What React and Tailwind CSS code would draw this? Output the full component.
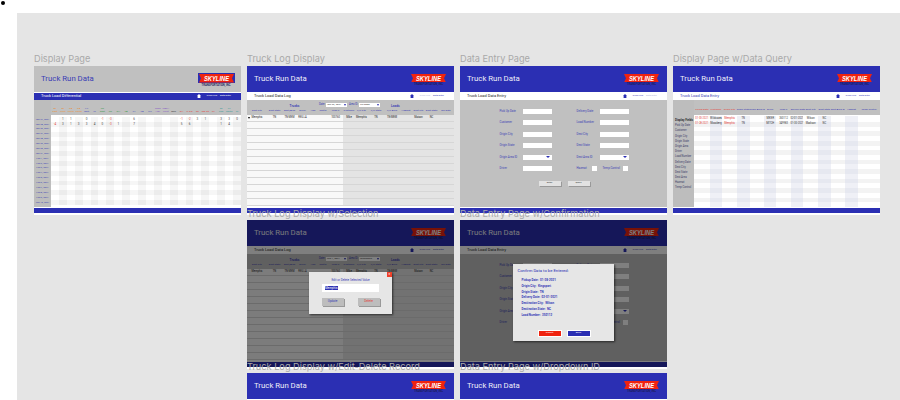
import React from 'react';

const BLUE = 'bg-[#2b2fb3]';

const Logo = ({ boxed }) => (
    <div className={`flex flex-col items-center mt-[2px] ${boxed ? 'mr-[-1.5px]' : ''}`}>
        <svg width={boxed ? 37 : 35} height={boxed ? 10.5 : 8.5} viewBox={boxed ? '-1 -1 37 10.5' : '0 0 35 8.5'} className="block">
            {boxed && <rect x="-1" y="-1" width="37" height="10.5" fill="#2b2fb3" />}
            <polygon points="0,0 35,0 33,4.25 35,8.5 0,8.5 2,4.25" fill="#f0230f" />
            <text x="17.5" y="6.6" textAnchor="middle" textLength="25" lengthAdjust="spacingAndGlyphs" fontFamily="Liberation Sans, sans-serif" fontSize="6.4" fontWeight="700" fontStyle="italic" fill="#fff">SKYLINE</text>
        </svg>
        <span className="text-[2.7px] leading-[3px] mt-[1px] text-[#1c1c5a] font-semibold whitespace-nowrap">TRANSPORTATION, INC</span>
    </div>
);

const HomeIcon = ({ color = '#2b2fb3' }) => (
    <svg width="4" height="4" viewBox="0 0 10 10" className="block">
        <polygon points="5,0 10,5 8.5,5 8.5,10 1.5,10 1.5,5 0,5" fill={color} />
    </svg>
);

const Header = ({ gray }) => (
    <div className={`h-[26px] flex items-center justify-between pl-[7px] pr-[8px] ${gray ? 'bg-[#c0c0c0]' : BLUE}`}>
        <span className={`text-[7.8px] leading-none ${gray ? 'text-[#3a3db5]' : 'text-[#eeeef8]'}`}>Truck Run Data</span>
        <Logo boxed={gray} />
    </div>
);

const Nav = ({ title, blue, titleClass = 'text-[#222]', dimEntry, dimLog }) => (
    <div className={`h-[7.5px] mt-[0.5px] flex items-center justify-between pl-[7px] pr-[10px] ${blue ? BLUE : 'bg-white'}`}>
        <span className={`text-[4px] leading-none ${blue ? 'text-white' : titleClass}`}>{title}</span>
        <div className="flex items-center gap-[3px]">
            <HomeIcon color={blue ? '#fff' : '#2b2fb3'} />
            <span className={`text-[2.4px] ml-[3px] ${blue ? 'text-white' : dimLog ? 'text-[#b4b4d8]' : 'text-[#3a3db5]'}`}>Truck Log</span>
            <span className={`text-[2.4px] ${blue ? 'text-white' : dimEntry ? 'text-[#b4b4d8]' : 'text-[#3a3db5]'}`}>Data Entry</span>
        </div>
    </div>
);

const Footer = () => <div className={`h-[5.5px] mt-[0.5px] ${BLUE}`} />;

// top row group colours of the differential table
const stateCols = [
    ['AL East', 'text-[#e8913a]'], ['AL West', 'text-[#e8913a]'], ['GA North', 'text-[#e8913a]'], ['GA South', 'text-[#e8913a]'],
    ['KY East', 'text-[#4a4fc0]'], ['IN', 'text-[#4a4fc0]'], ['NC East', 'text-[#3c9a4a]'], ['NC', 'text-[#3c9a4a]'],
    ['OH', 'text-[#3c9a4a]'], ['PA', 'text-[#3c9a4a]'], ['TX', 'text-[#4a4fc0]'], ['VA', 'text-[#4a4fc0]'],
    ['WV', 'text-[#4a4fc0]'], ['MEM HZL', 'text-[#8a5cc4]'], ['NASH Front', 'text-[#8a5cc4]'], ['NUL', 'text-[#222]'],
    ['OH', 'text-[#e2413a]'], ['IL Chi', 'text-[#e2413a]'], ['MI', 'text-[#e2413a]'], ['MO Stl', 'text-[#e2413a]'],
    ['WI', 'text-[#e2413a]'], ['SC Chs', 'text-[#2f9a94]'], ['FL North', 'text-[#2f9a94]'], ['FL', 'text-[#2f9a94]'],
];

const dates = [
    'Jan 24, 2021', 'Jan 25, 2021', 'Jan 26, 2021', 'Jan 27, 2021', 'Jan 28, 2021', 'Jan 29, 2021', 'Jan 30, 2021', 'Jan 31, 2021',
    'Feb 1, 2021', 'Feb 2, 2021', 'Feb 3, 2021', 'Feb 4, 2021', 'Feb 5, 2021', 'Feb 6, 2021', 'Feb 7, 2021', 'Feb 8, 2021', 'Feb 9, 2021', 'Feb 10, 2021',
];

const diffValues = {
    0: { 1: '1', 2: '1', 4: '0', 6: '-1', 7: '-3', 10: '6', 16: '-1', 17: '-2', 18: '3', 19: '1', 21: '3', 22: '3', 23: '0' },
    1: { 0: '-4', 1: '3', 2: '1', 3: '3', 4: '3', 5: '4', 6: '0', 7: '-3', 8: '1', 10: '7', 16: '5', 17: '6', 21: '1', 22: '4' },
};

const DisplayPage = () => (
    <>
        <Header gray />
        <Nav title="Truck Load Differential" blue />
        <div className="flex h-[107px]">
            <div className="w-[17px] bg-[#bdbdbd] pt-[17px]">
                {dates.map(d => (
                    <div key={d} className="h-[4.88px] flex items-center justify-center text-[2.4px] text-[#3a3db5] whitespace-nowrap">{d}</div>
                ))}
            </div>
            <div className="flex-1 flex flex-col">
                <div className="h-[15px] shrink-0 bg-[#c0c0c0] grid grid-cols-[repeat(24,1fr)] items-end pb-[2px]">
                    {stateCols.map(([name, color], i) => (
                        <span key={i} className={`text-[2.5px] leading-[3px] text-center ${color}`}>{name}</span>
                    ))}
                </div>
                <div className="flex-1 flex flex-col py-[2px] bg-white">
                    {dates.map((d, r) => (
                        <div key={d} className="flex-1 min-h-0 grid grid-cols-[repeat(24,1fr)]">
                            {stateCols.map((_, c) => {
                                const val = diffValues[r] && diffValues[r][c];
                                let bg = 'bg-white';
                                if (r % 2 === 1 && c % 2 === 1) bg = 'bg-[#ececec]';
                                else if (r % 2 === 1 || c % 2 === 1) bg = 'bg-[#f6f6f6]';
                                return (
                                    <div key={c} className={`${bg} flex items-center justify-center text-[3px] leading-none ${val && val[0] === '-' ? 'text-[#e2413a]' : 'text-[#444]'}`}>{val}</div>
                                );
                            })}
                        </div>
                    ))}
                </div>
            </div>
        </div>
        <Footer />
    </>
);

const logCols = ['Dest City', 'Dest State', 'Dest/Area', 'Driver', 'Haz', 'Reefer', 'Load #', 'Customer', 'P/U City', 'P/U State', 'P/U Area', 'Hazmat', 'Dest City', 'Dest State', 'Del Date'];
const logRow = ['Memphis', 'TN', 'TN-MEM', 'REILLA', '', '', '100760', 'Mike', 'Memphis', 'TN', 'TN-MEM', '', 'Maison', 'NC', ''];
const logGrid = 'grid grid-cols-[20px_15px_15px_11px_10px_10px_15px_12px_13px_16px_16px_12px_13px_13px_16px]';

const MiniSelect = ({ value, width }) => (
    <div className={`${width} h-[4px] bg-white flex items-center justify-between pl-[1px] pr-[1px]`}>
        <span className="text-[2.5px] leading-none text-[#333] whitespace-nowrap">{value}</span>
        <span className="w-0 h-0 border-l-[1.5px] border-r-[1.5px] border-t-[2px] border-l-transparent border-r-transparent border-t-[#2b2fb3]" />
    </div>
);

const LogDisplay = ({ date, area, dim }) => (
    <>
        <Header />
        <Nav title="Truck Load Data Log" dimLog={!dim} />
        <div className="h-[15px] bg-[#c0c0c0] flex flex-col">
            <div className="flex items-center h-[8px] pt-[2px]">
                <span className="w-[63px] pt-[2px] text-center pl-[32px] text-[3.2px] font-semibold text-[#3a3db5]">Trucks</span>
                <span className="ml-[9px] text-[2.6px] text-[#3a3db5] mr-[1px]">Date:</span>
                <MiniSelect value={date} width="w-[21px]" />
                <span className="ml-[2px] mr-[1px] text-[2.6px] text-[#3a3db5] whitespace-nowrap">Area ID:</span>
                <MiniSelect value={area} width="w-[21px]" />
                <span className="ml-[11px] pt-[2px] text-[3.2px] font-semibold text-[#3a3db5]">Loads</span>
            </div>
            <div className={`${logGrid} flex-1 items-center`}>
                {logCols.map((c, i) => (
                    <span key={i} className="text-[2.5px] leading-none text-center text-[#3a3db5] whitespace-nowrap">{c}</span>
                ))}
            </div>
        </div>
        <div className="h-[92px] flex flex-col">
            {Array.from({ length: 13 }).map((_, r) => (
                <div key={r} className={`${logGrid} h-[7px] border-b border-[#d6d6d6]`}>
                    {logRow.map((v, i) => (
                        <div key={i} className={`relative flex items-center justify-center text-[2.6px] leading-none text-[#222] whitespace-nowrap ${i < 7 ? 'bg-[#f8f8f8]' : 'bg-[#e4e4e4]'}`}>
                            {r === 0 && v}
                            {r === 0 && i === 0 && !dim && (
                                <span className="absolute left-[1px] top-[2px] w-0 h-0 border-l-[1.5px] border-r-[1.5px] border-t-[2px] border-l-transparent border-r-transparent border-t-black" />
                            )}
                        </div>
                    ))}
                </div>
            ))}
        </div>
        <Footer />
    </>
);

const Field = ({ label, select }) => (
    <div className="flex items-center h-[5px]">
        <span className="w-[23px] text-[2.9px] leading-none text-[#3a3db5] whitespace-nowrap">{label}</span>
        <div className="w-[29px] h-[5px] bg-white flex items-center justify-end pr-[1.5px]">
            {select && <span className="w-0 h-0 border-l-[2px] border-r-[2px] border-t-[2.5px] border-l-transparent border-r-transparent border-t-[#2b2fb3]" />}
        </div>
    </div>
);

const Check = ({ label, width }) => (
    <div className="flex items-center h-[5px]">
        <span className={`${width} text-[2.9px] leading-none text-[#3a3db5] whitespace-nowrap`}>{label}</span>
        <div className="w-[5px] h-[5px] bg-white" />
    </div>
);

const DataEntry = ({ dimLog }) => (
    <>
        <Header />
        <Nav title="Truck Load Data Entry" dimEntry={!dimLog} />
        <div className="h-[107px] bg-[#c0c0c0] flex flex-col pt-[8.5px] items-center">
            <div className="grid grid-cols-[52px_52px] gap-x-[25px] gap-y-[6.5px] ml-[1px]">
                <Field label="Pick Up Date" />
                <Field label="Delivery Date" />
                <Field label="Customer" />
                <Field label="Load Number" />
                <Field label="Origin City" />
                <Field label="Dest City" />
                <Field label="Origin State" />
                <Field label="Dest State" />
                <Field label="Origin Area ID" select />
                <Field label="Dest Area ID" select />
                <Field label="Driver" />
                <div className="flex gap-[6px]">
                    <Check label="Hazmat" width="w-[15px]" />
                    <Check label="Temp Control" width="w-[20.5px]" />
                </div>
            </div>
            <div className="flex gap-[7px] mt-[10px] ml-[1px]">
                <div className="w-[22px] h-[5px] bg-[#e2e2e2] shadow-[1px_1px_0_#999] flex items-center justify-center text-[2.4px] leading-none text-[#333]">Enter</div>
                <div className="w-[22px] h-[5px] bg-[#e2e2e2] shadow-[1px_1px_0_#999] flex items-center justify-center text-[2.4px] leading-none text-[#333]">Query</div>
            </div>
        </div>
        <Footer />
    </>
);

const queryCols = ['Pickup Date', 'Customer', 'Origin City', 'Origin State', 'Origin Area ID', 'Driver', 'Load #', 'Delivery Date', 'Dest City', 'Dest State', 'Dest Area ID', 'Hazmat', 'Temp Control'];
const queryGrid = 'grid grid-cols-[15.7px_12.7px_14.3px_13px_14.4px_12.3px_14.3px_12.7px_14.7px_12.6px_14.4px_13px_1fr]';
const queryRows = [
    ['01-30-2021', 'Wildcases', 'Memphis', 'TN', '', 'MIKER', '350112', '02-01-2021', 'Wilson', 'NC', '', '', ''],
    ['01-28-2021', 'Mossberg', 'Memphis', 'TN', '', 'MITCH', '349983', '01-30-2021', 'Madison', 'NC', '', '', ''],
];
const queryFields = ['Pick Up Date', 'Customer', 'Origin City', 'Origin State', 'Origin Area', 'Driver', 'Load Number', 'Delivery Date', 'Dest City', 'Dest State', 'Dest Area', 'Hazmat', 'Temp Control'];

const DataQuery = () => (
    <>
        <Header />
        <Nav title="Truck Load Data Entry" titleClass="text-[#3a3db5]" />
        <div className="flex h-[107px]">
            <div className="w-[21px] bg-[#bdbdbd] pt-[18px] pl-[2px]">
                <div className="h-[5.2px] text-[2.9px] leading-[5.2px] font-semibold text-[#222] whitespace-nowrap">Display Fields</div>
                {queryFields.map(f => (
                    <div key={f} className="h-[5.2px] text-[2.7px] leading-[5.2px] text-[#3a3a66] whitespace-nowrap">{f}</div>
                ))}
            </div>
            <div className="flex-1 flex flex-col">
                <div className={`${queryGrid} h-[15px] shrink-0 bg-[#c0c0c0] items-end pb-[3.5px]`}>
                    {queryCols.map((c, i) => (
                        <span key={c} className={`text-[2.5px] leading-none text-center whitespace-nowrap ${i < 3 ? 'text-[#e2413a]' : 'text-[#3a3db5]'}`}>{c}</span>
                    ))}
                </div>
                <div className="flex-1 flex flex-col">
                    {Array.from({ length: 19 }).map((_, r) => (
                        <div key={r} className={`${queryGrid} min-h-0 ${r === 0 ? 'h-[7px] pt-[1px] bg-white' : 'flex-1'}`}>
                            {queryCols.map((_, c) => {
                                const val = queryRows[r] && queryRows[r][c];
                                let bg = 'bg-white';
                                if (c % 2 === 1 && r % 2 === 1) bg = 'bg-[#e6e8f0]';
                                else if (c % 2 === 1) bg = 'bg-[#eff0f6]';
                                else if (r % 2 === 1) bg = 'bg-[#f3f3f3]';
                                return (
                                    <div key={c} className={`${bg} flex items-center justify-center text-[2.6px] leading-none whitespace-nowrap ${c === 0 || c === 2 ? 'text-[#e2413a]' : 'text-[#333]'}`}>{val}</div>
                                );
                            })}
                        </div>
                    ))}
                </div>
            </div>
        </div>
        <Footer />
    </>
);

const EditDialog = () => (
    <div className="absolute left-[62px] top-[52px] w-[83px] h-[42px] bg-[#e6e6e6] shadow-[1px_1px_2px_rgba(0,0,0,0.6)] flex flex-col items-center pt-[7px]">
        <div className="absolute right-[0.5px] top-0 w-[4.5px] h-[4.5px] bg-[#f0402a] text-white text-[3px] leading-[4.5px] text-center">×</div>
        <span className="text-[3px] leading-none text-[#3a3db5]">Edit or Delete Selected Value</span>
        <div className="w-[57px] h-[7.5px] mt-[2px] bg-white flex items-center pl-[2.5px]">
            <span className="bg-[#2b2fb3] text-white text-[3px] leading-[4px] px-[0.5px]">Memphis</span>
        </div>
        <div className="flex gap-[14px] mt-[6px]">
            <div className="w-[22px] h-[8px] bg-[#bdbdbd] shadow-[1px_1px_0_#999] flex items-center justify-center text-[3px] leading-none text-[#3a3db5]">Update</div>
            <div className="w-[22px] h-[8px] bg-[#bdbdbd] shadow-[1px_1px_0_#999] flex items-center justify-center text-[3px] leading-none text-[#e2413a]">Delete</div>
        </div>
    </div>
);

const confirmLines = [
    'Pickup Date:  01-28-2021', 'Origin City:  Kingsport', 'Origin State:  TN', 'Delivery Date:  02-01-2021',
    'Destination City:  Wilson', 'Destination State:  NC', 'Load Number:  350112',
];

const ConfirmDialog = () => (
    <div className="absolute left-[53px] top-[44px] w-[101px] h-[77px] bg-[#e6e6e6] shadow-[1px_1px_2px_rgba(0,0,0,0.6)] flex flex-col pt-[4px] pl-[4.5px]">
        <span className="text-[4.2px] leading-[5px] text-[#2b2fb3]">Confirm Data to be Entered:</span>
        <div className="mt-[5px] ml-[4px] flex flex-col">
            {confirmLines.map(l => (
                <span key={l} className="h-[5.8px] text-[3px] leading-[5.8px] font-semibold text-[#2b2fb3] whitespace-pre">{l}</span>
            ))}
        </div>
        <div className="flex gap-[7px] mt-auto mb-[5px] ml-[21px]">
            <div className="w-[22px] h-[5px] bg-[#f0230f] shadow-[0_0_0_1px_#fff] flex items-center justify-center text-[2.4px] leading-none text-white">Submit</div>
            <div className="w-[22px] h-[5px] bg-[#2b2fb3] shadow-[0_0_0_1px_#fff] flex items-center justify-center text-[2.4px] leading-none text-white">Back</div>
        </div>
    </div>
);

const Dim = ({ children }) => (
    <>
        <div className="absolute inset-x-0 top-0 h-[147px] bg-black/50" />
        {children}
    </>
);

const Title = ({ className, children }) => (
    <span className={`absolute text-[9.2px] leading-none text-[#a9a9a9] whitespace-nowrap ${className}`}>{children}</span>
);

export default function App() {
    return (
        <div className="relative w-[900px] h-[400px] overflow-hidden bg-white font-['Roboto',sans-serif]">
            <div className="absolute left-[1px] top-[1px] w-[3.5px] h-[3.5px] rounded-full bg-black" />

            {/* figma canvas */}
            <div className="absolute left-[17px] top-[13px] right-0 bottom-0 bg-[#e5e5e5]" />

            {/* boards */}
            <div className="absolute left-[34px] top-[66px] w-[207px] h-[149px] bg-white"><DisplayPage /></div>
            <div className="absolute left-[247px] top-[66px] w-[207px] h-[149px] bg-white"><LogDisplay date="Jan 29, 2021" area="TN-MEM" /></div>
            <div className="absolute left-[460px] top-[66px] w-[207px] h-[149px] bg-white"><DataEntry /></div>
            <div className="absolute left-[673px] top-[66px] w-[207px] h-[149px] bg-white"><DataQuery /></div>

            <div className="absolute left-[247px] top-[220px] w-[207px] h-[149px] bg-white">
                <LogDisplay date="Feb 1, 2021" area="Tennessee" dim />
                <Dim><EditDialog /></Dim>
            </div>
            <div className="absolute left-[460px] top-[220px] w-[207px] h-[149px] bg-white">
                <DataEntry dimLog />
                <Dim><ConfirmDialog /></Dim>
            </div>

            <div className="absolute left-[247px] top-[373px] w-[207px] h-[149px] bg-white"><Header /></div>
            <div className="absolute left-[460px] top-[373px] w-[207px] h-[149px] bg-white"><Header /></div>

            {/* frame names sit above the boards */}
            <div className="font-['Inter',sans-serif]">
                <Title className="left-[34px] top-[54px]">Display Page</Title>
                <Title className="left-[247px] top-[54px]">Truck Log Display</Title>
                <Title className="left-[460px] top-[54px]">Data Entry Page</Title>
                <Title className="left-[673px] top-[54px]">Display Page w/Data Query</Title>
                <Title className="left-[247px] top-[208.5px]">Truck Log Display w/Selection</Title>
                <Title className="left-[460px] top-[208.5px]">Data Entry Page w/Confirmation</Title>
                <Title className="left-[247px] top-[361.5px]">Truck Log Display w/Edit-Delete Record</Title>
                <Title className="left-[460px] top-[361.5px]">Data Entry Page w/Dropdown ID</Title>
            </div>
        </div>
    );
}
